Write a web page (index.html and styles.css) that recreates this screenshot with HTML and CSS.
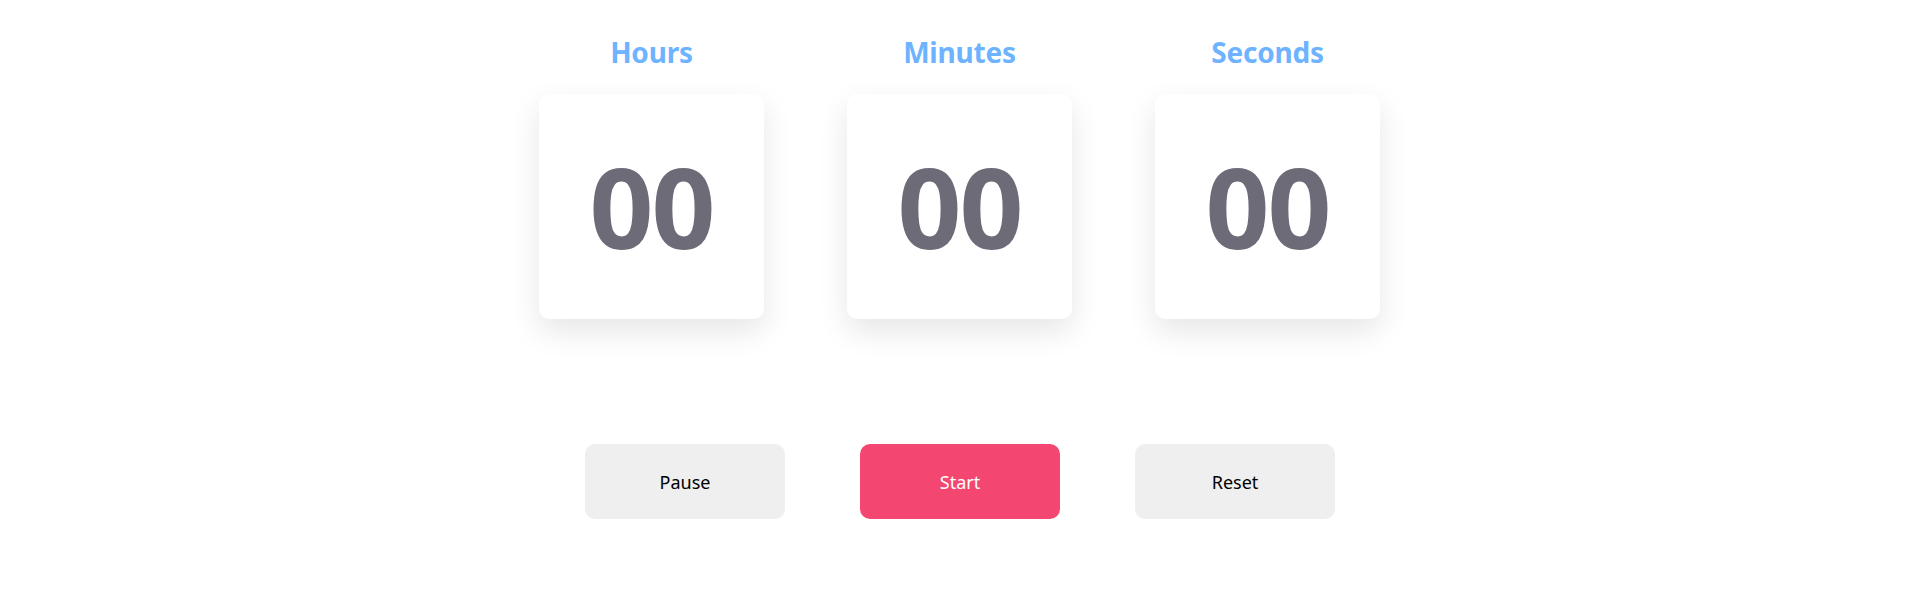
FILE: index.html
```html
<!DOCTYPE html>
<html lang="en">
<head>
<meta charset="utf-8">
<title>Timer</title>
<link rel="stylesheet" href="styles.css">
</head>
<body>
<main class="timer">
  <section class="units">
    <div class="unit">
      <h2 class="label">Hours</h2>
      <div class="card"><span class="digits">00</span></div>
    </div>
    <div class="unit">
      <h2 class="label">Minutes</h2>
      <div class="card"><span class="digits">00</span></div>
    </div>
    <div class="unit">
      <h2 class="label">Seconds</h2>
      <div class="card"><span class="digits">00</span></div>
    </div>
  </section>
  <section class="controls">
    <button class="btn">Pause</button>
    <button class="btn btn-primary">Start</button>
    <button class="btn">Reset</button>
  </section>
</main>
</body>
</html>
```

FILE: styles.css
```css
* { box-sizing: border-box; }
html, body { margin: 0; padding: 0; background: #ffffff; }
body {
  font-family: "Noto Sans", "Open Sans", sans-serif;
  width: 1918px;
  height: 597px;
  overflow: hidden;
}
.timer {
  display: flex;
  flex-direction: column;
  align-items: center;
  padding-top: 34px;
}
.units {
  display: flex;
  gap: 83px;
  margin-left: 1px;
}
.unit {
  display: flex;
  flex-direction: column;
  align-items: center;
  width: 225px;
}
.label {
  margin: 0;
  font-size: 28px;
  line-height: 36px;
  font-weight: 700;
  color: #6db3ff;
  letter-spacing: -0.2px;
}
.card {
  margin-top: 24px;
  width: 225px;
  height: 225px;
  border-radius: 10px;
  background: #ffffff;
  box-shadow: 0 12px 30px rgba(0, 0, 0, 0.10);
  display: flex;
  align-items: center;
  justify-content: center;
}
.digits {
  font-size: 112px;
  font-weight: 700;
  line-height: 1;
  color: #6e6b78;
  letter-spacing: -2px;
  padding-bottom: 2px;
}
.controls {
  display: flex;
  gap: 75px;
  margin-top: 125px;
  margin-left: 2px;
}
.btn {
  width: 200px;
  height: 75px;
  border: none;
  border-radius: 10px;
  background: #efefef;
  color: #000000;
  font-family: "Noto Sans", "Open Sans", sans-serif;
  font-size: 18px;
  cursor: pointer;
}
.btn-primary {
  background: #f34670;
  color: #ffffff;
}
```
